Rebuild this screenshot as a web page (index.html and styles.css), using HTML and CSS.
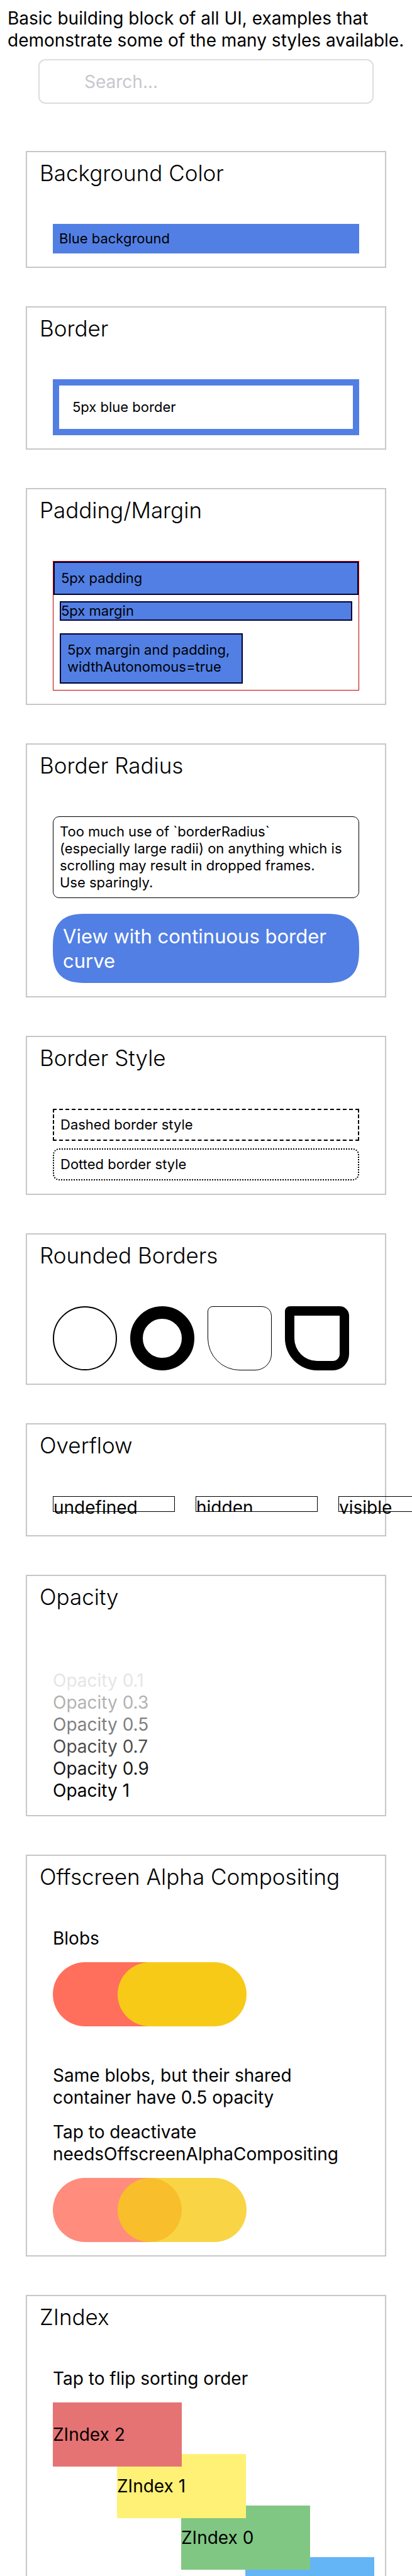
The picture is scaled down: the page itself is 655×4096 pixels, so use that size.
FILE: index.html
```html
<!DOCTYPE html>
<html lang="en">
<head>
<meta charset="utf-8">
<meta name="viewport" content="width=device-width, initial-scale=1">
<title>View</title>
<link rel="stylesheet" href="styles.css">
</head>
<body>
<main class="screen">
  <p class="intro">Basic building block of all UI, examples that demonstrate some of the many styles available.</p>
  <input class="search" type="search" placeholder="Search..." aria-label="Search">

  <div class="cards">
    <section class="card">
      <h2 class="card-title">Background Color</h2>
      <div class="card-body">
        <div class="fill small">Blue background</div>
      </div>
    </section>

    <section class="card">
      <h2 class="card-title">Border</h2>
      <div class="card-body">
        <div class="thick small">5px blue border</div>
      </div>
    </section>

    <section class="card">
      <h2 class="card-title">Padding/Margin</h2>
      <div class="card-body">
        <div class="frame small">
          <div class="box box-padding">5px padding</div>
          <div class="box box-margin">5px margin</div>
          <div class="box box-padding box-margin box-auto">5px margin and padding,<br>widthAutonomous=true</div>
        </div>
      </div>
    </section>

    <section class="card">
      <h2 class="card-title">Border Radius</h2>
      <div class="card-body">
        <div class="rounded small">Too much use of `borderRadius`<br>(especially large radii) on anything which is scrolling may result in dropped frames.<br>Use sparingly.</div>
        <div class="continuous">View with continuous border curve</div>
      </div>
    </section>

    <section class="card">
      <h2 class="card-title">Border Style</h2>
      <div class="card-body styles">
        <div class="dashed small">Dashed border style</div>
        <div class="dotted small">Dotted border style</div>
      </div>
    </section>

    <section class="card">
      <h2 class="card-title">Rounded Borders</h2>
      <div class="card-body shapes">
        <div class="shape circle"></div>
        <div class="shape ring"></div>
        <div class="shape corners"></div>
        <div class="shape corners corners-thick"></div>
      </div>
    </section>

    <section class="card">
      <h2 class="card-title">Overflow</h2>
      <div class="card-body overflow">
        <div class="clip">undefined</div>
        <div class="clip clip-hidden">hidden</div>
        <div class="clip">visible</div>
      </div>
    </section>

    <section class="card">
      <h2 class="card-title">Opacity</h2>
      <div class="card-body fades">
        <div class="fade-1">Opacity 0.1</div>
        <div class="fade-3">Opacity 0.3</div>
        <div class="fade-5">Opacity 0.5</div>
        <div class="fade-7">Opacity 0.7</div>
        <div class="fade-9">Opacity 0.9</div>
        <div>Opacity 1</div>
      </div>
    </section>

    <section class="card">
      <h2 class="card-title">Offscreen Alpha Compositing</h2>
      <div class="card-body">
        <div>Blobs</div>
        <div class="blobs">
          <div class="blob"></div>
          <div class="blob blob-second"></div>
        </div>
        <div class="note">Same blobs, but their shared container have 0.5 opacity</div>
        <button class="tap" type="button">Tap to deactivate needsOffscreenAlphaCompositing</button>
        <div class="blobs blobs-faded">
          <div class="blob"></div>
          <div class="blob blob-second"></div>
        </div>
      </div>
    </section>

    <section class="card">
      <h2 class="card-title">ZIndex</h2>
      <div class="card-body">
        <button class="tap" type="button">Tap to flip sorting order</button>
        <div class="stack">
          <div class="layer layer-red">ZIndex 2</div>
          <div class="layer layer-yellow">ZIndex 1</div>
          <div class="layer layer-green">ZIndex 0</div>
          <div class="layer layer-blue"></div>
        </div>
      </div>
    </section>
  </div>
</main>
</body>
</html>
```
FILE: styles.css
```css
* {
  box-sizing: border-box;
}

body {
  margin: 0;
  background: #fff;
  color: #000;
  font-family: Inter, "Liberation Sans", sans-serif;
  font-size: 28px;
  line-height: 35px;
}

.screen {
  position: relative;
  z-index: 0;
  height: 100vh;
  padding: 12px 0 61px;
  overflow-x: hidden;
  overflow-y: auto;
  scrollbar-width: none;
}

.intro {
  margin: 0 0 12px;
  padding: 0 12px;
}

.search {
  display: block;
  width: calc(100% - 122px);
  height: 71px;
  margin: 0 auto 75px;
  padding: 0 20px 0 71px;
  border: 2px solid #ddd;
  border-radius: 11px;
  background: #fff;
  color: #000;
  font: inherit;
  appearance: none;
}

.search::placeholder {
  color: #c7c7cc;
  opacity: 1;
}

.cards {
  display: flex;
  flex-direction: column;
  gap: 61px;
  padding: 0 41px;
}

.card {
  border: 2px solid #c7c7c7;
}

.card-title {
  margin: 0;
  padding: 11px 20px;
  font-size: 35px;
  font-weight: 300;
  line-height: 44px;
}

.card-body {
  padding: 48px 41px 21px;
}

.small {
  font-size: 22px;
  line-height: 27px;
}

.fill {
  padding: 10px;
  background: #527fe4;
}

.thick {
  padding: 21px;
  border: 10px solid #527fe4;
}

.frame {
  border: 1px solid #b00;
}

.box {
  border: 2px solid #003;
  background: #527fe4;
}

.box-padding {
  padding: 11px 10px;
}

.box-margin {
  margin: 10px;
}

.box-auto {
  width: 60%;
  margin-top: 20px;
}

.rounded {
  padding: 10px;
  border: 1px solid #000;
  border-radius: 10px;
}

.continuous {
  margin-top: 25px;
  padding: 16px;
  border-radius: 42px;
  background: #527fe4;
  color: #fff;
  font-size: 31px;
  line-height: 39px;
}

@supports (corner-shape: superellipse(1.5)) {
  .continuous {
    border-radius: 55px;
    corner-shape: superellipse(1.5);
  }
}

.styles {
  display: grid;
  gap: 12px;
}

.dashed,
.dotted {
  padding: 10px;
  border: 2px dashed #000;
}

.dotted {
  border-style: dotted;
  border-radius: 10px;
}

.shapes {
  display: flex;
  gap: 21px;
}

.shape {
  flex: none;
  width: 102px;
  height: 102px;
  border: 2px solid #000;
}

.circle {
  border-radius: 50%;
}

.ring {
  border-width: 20px;
  border-radius: 50%;
}

.corners {
  border-width: 1px;
  border-radius: 8px 15px 26px 51px;
}

.corners-thick {
  border-width: 15px;
}

.overflow {
  display: flex;
  gap: 33px;
  margin-bottom: 16px;
}

.clip {
  flex: none;
  width: 194px;
  height: 25px;
  border: 1px solid #000;
}

.clip-hidden {
  overflow: hidden;
}

.fades {
  padding-top: 83px;
}

.fade-1 {
  opacity: 0.1;
}

.fade-3 {
  opacity: 0.3;
}

.fade-5 {
  opacity: 0.5;
}

.fade-7 {
  opacity: 0.7;
}

.fade-9 {
  opacity: 0.9;
}

.blobs {
  display: flex;
  margin-top: 20px;
}

.blob {
  width: 205px;
  height: 102px;
  border-radius: 51px;
  background: #ff6f5c;
}

.blob-second {
  margin-left: -102px;
  background: #f7ca18;
}

.blobs-faded .blob {
  opacity: 0.8;
}

.note {
  margin: 61px 0 20px;
}

.tap {
  display: block;
  width: 100%;
  padding: 0;
  border: 0;
  background: none;
  color: inherit;
  font: inherit;
  text-align: left;
}

.stack {
  display: grid;
  grid-template-columns: repeat(5, 102px);
  grid-auto-rows: 82px;
  margin-top: 20px;
  padding-bottom: 20px;
}

.layer {
  display: flex;
  align-items: center;
  width: 205px;
  height: 102px;
}

.layer-red {
  z-index: 2;
  grid-area: 1 / 1;
  background: #e57373;
}

.layer-yellow {
  z-index: 1;
  grid-area: 2 / 2;
  background: #fff176;
}

.layer-green {
  z-index: 0;
  grid-area: 3 / 3;
  background: #81c784;
}

.layer-blue {
  z-index: -1;
  grid-area: 4 / 4;
  background: #64b5f6;
}
```
